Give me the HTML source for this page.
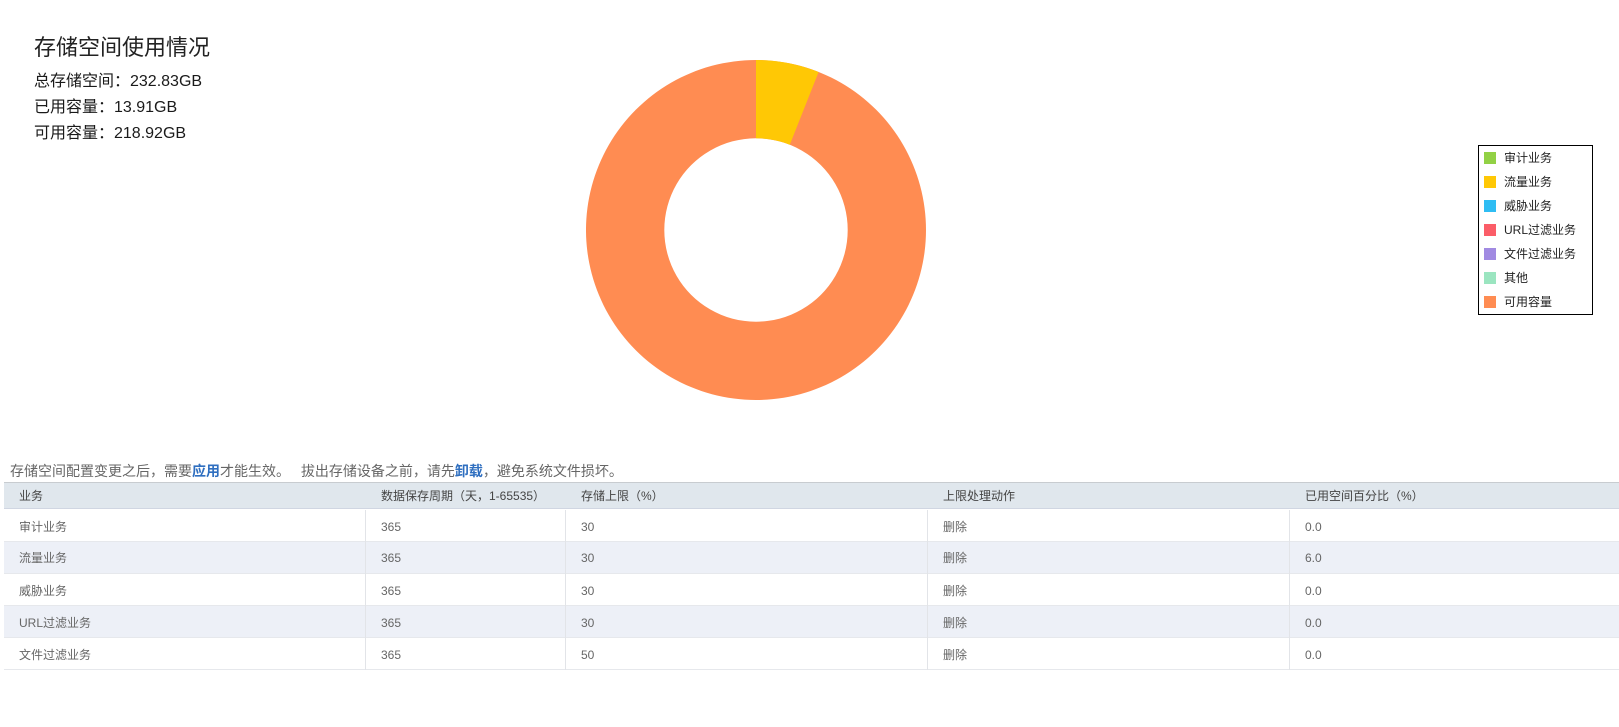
<!DOCTYPE html>
<html lang="zh-CN">
<head>
<meta charset="utf-8">
<title>存储空间使用情况</title>
<style>
html,body{margin:0;padding:0;background:#fff;}
body{width:1619px;height:727px;position:relative;overflow:hidden;font-family:"Liberation Sans","Noto Sans CJK SC",sans-serif;}
.a{position:absolute;white-space:nowrap;}
.t{left:34px;color:#1a1a1a;font-size:16px;line-height:26px;}
.sw{position:absolute;left:5px;width:12px;height:12px;}
.lg{position:absolute;left:25px;font-size:12px;line-height:16px;color:#222;white-space:nowrap;}
.row{position:absolute;left:4px;width:1615px;height:32px;box-sizing:border-box;border-bottom:1px solid #e6e8ec;}
.alt{background:#edf0f7;}
.c{position:absolute;top:0;line-height:34px;font-size:12px;color:#666;white-space:nowrap;}
.h .c{color:#444;line-height:26px;}
.v{position:absolute;top:510px;height:160px;width:1px;background:#e2e4e8;}
</style>
</head>
<body>
<div class="a" style="left:34px;top:32px;font-size:22px;line-height:32px;color:#222;">存储空间使用情况</div>
<div class="a t" style="top:69px;">总存储空间：232.83GB</div>
<div class="a t" style="top:95px;">已用容量：13.91GB</div>
<div class="a t" style="top:121px;">可用容量：218.92GB</div>

<svg class="a" style="left:586px;top:60px;" width="340" height="340" viewBox="586 60 340 340">
<path fill-rule="evenodd" fill="#ff8c52" d="M756 60A170 170 0 1 1 755.99 60ZM756 138.3A91.7 91.7 0 1 0 756.01 138.3Z"/>
<path fill="#ffc805" d="M756 60A170 170 0 0 1 818.6 72L789.8 144.7A91.7 91.7 0 0 0 756 138.3Z"/>
</svg>

<div class="a" style="left:1478px;top:145px;width:113px;height:168px;border:1px solid #000;background:#fff;">
<div class="sw" style="top:6px;background:#92d145;"></div><div class="lg" style="top:4px;">审计业务</div>
<div class="sw" style="top:30px;background:#ffc805;"></div><div class="lg" style="top:28px;">流量业务</div>
<div class="sw" style="top:54px;background:#2fbdf3;"></div><div class="lg" style="top:52px;">威胁业务</div>
<div class="sw" style="top:78px;background:#fb5d68;"></div><div class="lg" style="top:76px;">URL过滤业务</div>
<div class="sw" style="top:102px;background:#a18ae2;"></div><div class="lg" style="top:100px;">文件过滤业务</div>
<div class="sw" style="top:126px;background:#9be5c0;"></div><div class="lg" style="top:124px;">其他</div>
<div class="sw" style="top:150px;background:#ff8c52;"></div><div class="lg" style="top:148px;">可用容量</div>
</div>

<div class="a" style="left:10px;top:461px;font-size:14px;line-height:20px;color:#666;">存储空间配置变更之后，需要<span style="color:#2f6fc0;font-weight:bold;">应用</span>才能生效。　 拔出存储设备之前，请先<span style="color:#2f6fc0;font-weight:bold;">卸载</span>，避免系统文件损坏。</div>

<div class="row h" style="top:482px;height:27px;background:#e0e7ed;border-top:1px solid #c8ccd0;border-bottom:1px solid #d0d6e2;">
<div class="c" style="left:15px;">业务</div>
<div class="c" style="left:377px;">数据保存周期（天，1-65535）</div>
<div class="c" style="left:577px;">存储上限（%）</div>
<div class="c" style="left:939px;">上限处理动作</div>
<div class="c" style="left:1301px;">已用空间百分比（%）</div>
</div>

<div class="row" style="top:509px;height:33px;">
<div class="c" style="left:15px;line-height:36px;">审计业务</div><div class="c" style="left:377px;line-height:36px;">365</div><div class="c" style="left:577px;line-height:36px;">30</div><div class="c" style="left:939px;line-height:36px;">删除</div><div class="c" style="left:1301px;line-height:36px;">0.0</div>
</div>
<div class="row alt" style="top:542px;">
<div class="c" style="left:15px;line-height:32px;">流量业务</div><div class="c" style="left:377px;line-height:32px;">365</div><div class="c" style="left:577px;line-height:32px;">30</div><div class="c" style="left:939px;line-height:32px;">删除</div><div class="c" style="left:1301px;line-height:32px;">6.0</div>
</div>
<div class="row" style="top:574px;">
<div class="c" style="left:15px;">威胁业务</div><div class="c" style="left:377px;">365</div><div class="c" style="left:577px;">30</div><div class="c" style="left:939px;">删除</div><div class="c" style="left:1301px;">0.0</div>
</div>
<div class="row alt" style="top:606px;">
<div class="c" style="left:15px;">URL过滤业务</div><div class="c" style="left:377px;">365</div><div class="c" style="left:577px;">30</div><div class="c" style="left:939px;">删除</div><div class="c" style="left:1301px;">0.0</div>
</div>
<div class="row" style="top:638px;">
<div class="c" style="left:15px;">文件过滤业务</div><div class="c" style="left:377px;">365</div><div class="c" style="left:577px;">50</div><div class="c" style="left:939px;">删除</div><div class="c" style="left:1301px;">0.0</div>
</div>

<div class="v" style="left:365px;"></div>
<div class="v" style="left:565px;"></div>
<div class="v" style="left:927px;"></div>
<div class="v" style="left:1289px;"></div>
</body>
</html>
